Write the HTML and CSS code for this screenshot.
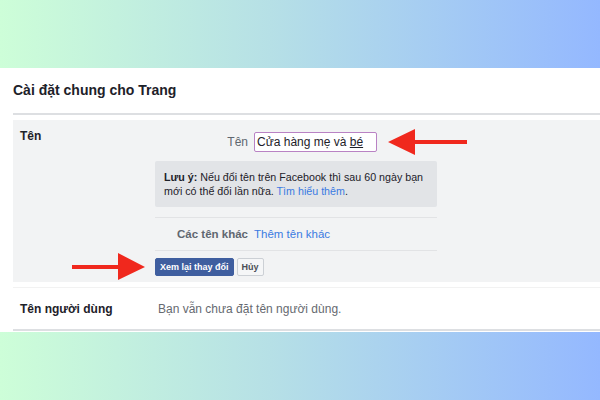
FILE: index.html
```html
<!DOCTYPE html>
<html lang="vi">
<head>
    <meta charset="UTF-8">
    <meta name="viewport" content="width=device-width, initial-scale=1.0">
    <title>Cài đặt chung cho Trang</title>
    <link rel="stylesheet" href="styles.css">
</head>
<body>

<section class="panel">
    <h2 class="panel-title">Cài đặt chung cho Trang</h2>

    <div class="settings">
        <div class="setting setting-open">
            <div class="setting-label">Tên</div>
            <div class="setting-body">
                <div class="field">
                    <span class="field-label">Tên</span>
                    <div class="field-input">Cửa hàng mẹ và <span class="composing">bé</span></div>
                </div>

                <div class="note">
                    <b>Lưu ý:</b> Nếu đổi tên trên Facebook thì sau 60 ngày bạn<br>
                    mới có thể đổi lần nữa. <a href="#">Tìm hiểu thêm</a>.
                </div>

                <div class="field field-other">
                    <span class="field-label field-label-bold">Các tên khác</span>
                    <a href="#">Thêm tên khác</a>
                </div>

                <div class="actions">
                    <button type="button" class="btn btn-primary">Xem lại thay đổi</button>
                    <button type="button" class="btn">Hủy</button>
                </div>
            </div>
        </div>

        <div class="setting setting-user">
            <div class="setting-label">Tên người dùng</div>
            <div class="setting-value">Bạn vẫn chưa đặt tên người dùng.</div>
        </div>
    </div>

    <!-- red callout arrows drawn over the screenshot -->
    <svg class="arrow arrow-input" width="82" height="30" viewBox="0 0 82 30">
        <polygon points="2,15 29,2 29,13 81,13 81,17 29,17 29,28" fill="#f0281d"/>
    </svg>
    <svg class="arrow arrow-button" width="78" height="31" viewBox="0 0 78 31">
        <polygon points="75,16 48,2 48,14 2,14 2,18 48,18 48,29" fill="#f0281d"/>
    </svg>
</section>

</body>
</html>
```

FILE: styles.css
```css
body {
    margin: 0;
    height: 400px;
    overflow: hidden;
    font-family: "Liberation Sans", Arial, sans-serif;
    color: #1d2129;
    background: linear-gradient(to right, #cdfed8, #b6e0e6 45%, #94b8ff);
}
.panel {
    position: relative;
    margin-top: 68px;
    height: 264px;
    padding-left: 13px;
    background-color: #fff;
    box-sizing: border-box;
}
.panel-title {
    margin: 0;
    height: 45px;
    line-height: 44px;
    font-size: 14px;
    font-weight: bold;
    border-bottom: 2px solid #dddfe2;
    box-sizing: content-box;
}
.settings {
    padding-top: 5px;
}
.setting {
    display: grid;
    grid-template-columns: 135px 1fr;
    padding-left: 7px;
    font-size: 12px;
}
.setting-label {
    font-weight: bold;
    color: #1d2129;
}
.setting-open {
    height: 162px;
    background-color: #f2f3f4;
    box-sizing: border-box;
}
.setting-open .setting-label {
    padding-top: 9px;
}
.setting-body {
    width: 282px;
    padding-top: 12px;
}
.field {
    display: grid;
    grid-template-columns: 93px auto;
    column-gap: 6px;
    align-items: center;
}
.field-label {
    text-align: right;
    color: #606770;
}
.field-label-bold {
    font-weight: bold;
    font-size: 11.5px;
}
.field-input {
    width: 123px;
    height: 20px;
    line-height: 18px;
    padding: 0 2px;
    border: 1px solid #b982c4;
    border-radius: 2px;
    background-color: #fff;
    box-sizing: border-box;
    white-space: nowrap;
}
.composing {
    text-decoration: underline;
}
.note {
    margin-top: 9px;
    height: 46px;
    padding: 10px 0 0 9px;
    font-size: 10.7px;
    line-height: 13.5px;
    white-space: nowrap;
    background-color: #e2e4e7;
    border-radius: 2px;
    box-sizing: border-box;
}
a {
    color: #3b7be2;
    text-decoration: none;
}
.field-other {
    margin-top: 10px;
    height: 32px;
    font-size: 11.5px;
    border-top: 1px solid #e2e3e5;
    border-bottom: 1px solid #e2e3e5;
}
.actions {
    display: flex;
    gap: 3px;
    margin-top: 7px;
}
.btn {
    height: 18px;
    padding: 0 4px;
    font-family: inherit;
    font-size: 9px;
    font-weight: bold;
    color: #4b4f56;
    background-color: #f5f6f7;
    border: 1px solid #ccd0d5;
    border-radius: 2px;
}
.btn-primary {
    color: #fff;
    background-color: #3f5e9f;
    border-color: #3f5e9f;
}
.setting-user {
    margin-top: 5px;
    height: 41px;
    align-items: center;
    border-top: 1px solid #f2f2f2;
    border-bottom: 2px solid #dddfe2;
    box-sizing: content-box;
}
.setting-value {
    padding-left: 3px;
    color: #666a70;
}
.arrow {
    position: absolute;
}
.arrow-input {
    left: 386px;
    top: 59px;
}
.arrow-button {
    left: 70px;
    top: 183px;
}
```
